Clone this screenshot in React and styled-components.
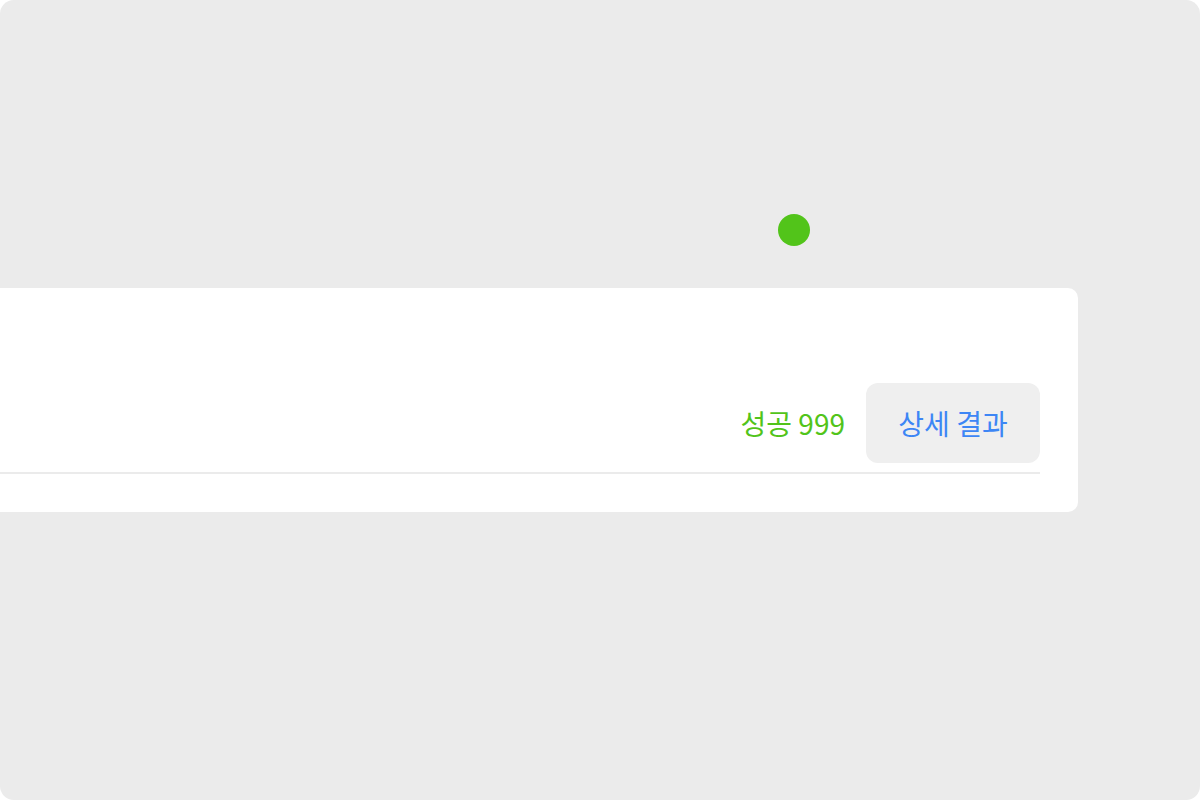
import React from 'react';
import styled, { createGlobalStyle } from 'styled-components';

const GlobalStyle = createGlobalStyle`
  html, body {
    margin: 0;
    padding: 0;
    background: #ffffff;
  }
  body {
    font-family: "Noto Sans CJK KR", "Noto Sans", sans-serif;
  }
`;

const Frame = styled.div`
  width: 1200px;
  height: 800px;
  box-sizing: border-box;
  background: #ebebeb;
  border-radius: 14px;
  overflow: hidden;
  padding-top: 214px;
  display: flex;
  flex-direction: column;
`;

const DotRow = styled.div`
  padding-left: 778px;
`;

const StatusDot = styled.div`
  width: 32px;
  height: 32px;
  border-radius: 50%;
  background: ${p => p.$color};
`;

const Card = styled.div`
  margin-top: 42px;
  margin-left: -40px;
  width: 1118px;
  height: 224px;
  box-sizing: border-box;
  background: #ffffff;
  border-radius: 10px;
  padding: 0 38px 38px 0;
  display: flex;
  flex-direction: column;
  justify-content: flex-end;
`;

const ResultRow = styled.div`
  display: flex;
  justify-content: flex-end;
  align-items: center;
  gap: 21px;
`;

const Count = styled.span`
  font-size: 28px;
  color: #52c41a;
  line-height: 1;
`;

const DetailButton = styled.button`
  width: 174px;
  height: 80px;
  padding: 0;
  border: none;
  border-radius: 12px;
  background: #efefef;
  color: #3d86f5;
  font-family: inherit;
  font-size: 28px;
  cursor: pointer;
`;

const Divider = styled.div`
  height: 2px;
  margin-top: 9px;
  background: #ebebeb;
`;

export default function App() {
  return (
    <>
      <GlobalStyle />
      <Frame>
        <DotRow>
          <StatusDot $color="#52c41a" />
        </DotRow>
        <Card>
          <ResultRow>
            <Count>성공 999</Count>
            <DetailButton>상세 결과</DetailButton>
          </ResultRow>
          <Divider />
        </Card>
      </Frame>
    </>
  );
}
